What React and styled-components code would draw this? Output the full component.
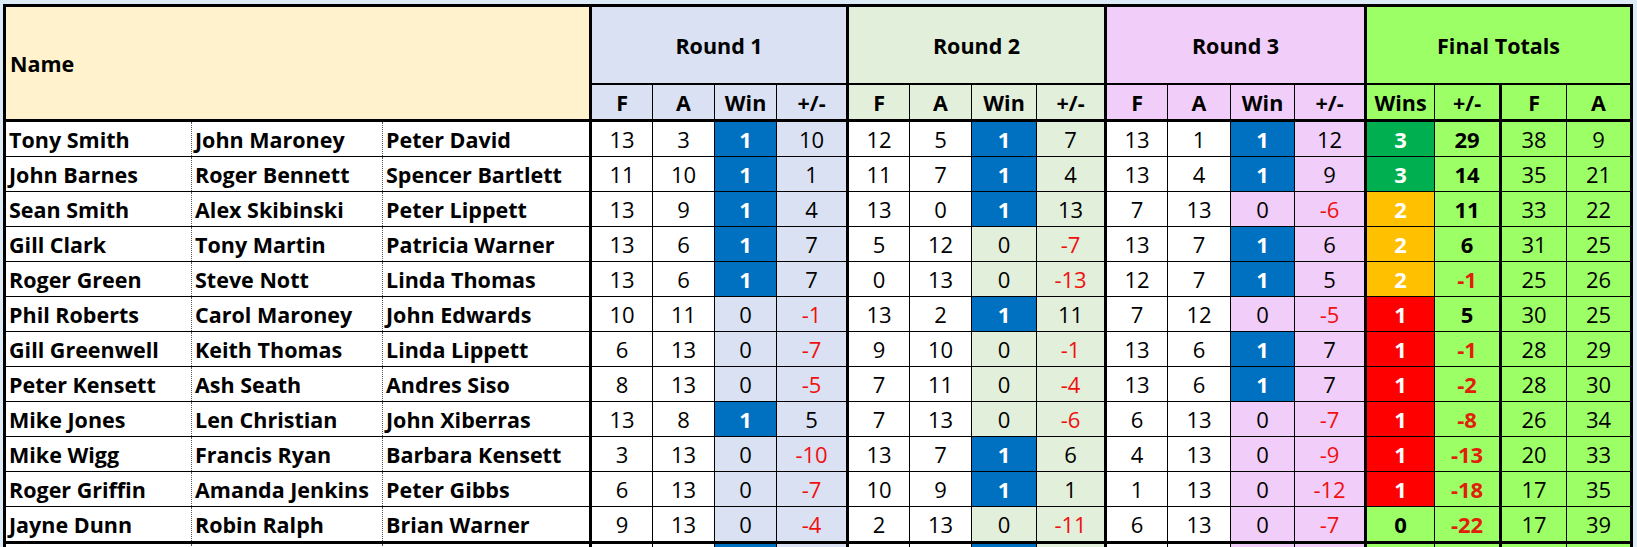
import React from "react";
import styled, { createGlobalStyle } from "styled-components";

const GlobalStyle = createGlobalStyle`
  html,
  body {
    margin: 0;
    padding: 0;
    background: #ddebf7;
    overflow: hidden;
  }

  body {
    font-family: "Open Sans", "Liberation Sans", sans-serif;
  }
`;

const fills = {
  white: "#ffffff",
  name: "#fff2cc",
  r1: "#d9e1f2",
  r2: "#e2efda",
  r3: "#f1cdf9",
  final: "#9cff66",
  blue: "#0070c0",
  green: "#00b050",
  gold: "#ffc000",
  red: "#ff0000",
};

const groups = [
  { key: "r1", label: "Round 1", cols: ["F", "A", "Win", "+/-"], widths: [62, 62, 62, 71] },
  { key: "r2", label: "Round 2", cols: ["F", "A", "Win", "+/-"], widths: [62, 62, 65, 69] },
  { key: "r3", label: "Round 3", cols: ["F", "A", "Win", "+/-"], widths: [62, 63, 64, 71] },
];

const finalCols = ["Wins", "+/-", "F", "A"];
const finalWidths = [69, 66, 66, 65];
const nameWidths = [187, 191, 208];

const rows = [
  [["Tony Smith", "John Maroney", "Peter David"], [[13, 3, 1, 10], [12, 5, 1, 7], [13, 1, 1, 12]], [3, 29, 38, 9]],
  [["John Barnes", "Roger Bennett", "Spencer Bartlett"], [[11, 10, 1, 1], [11, 7, 1, 4], [13, 4, 1, 9]], [3, 14, 35, 21]],
  [["Sean Smith", "Alex Skibinski", "Peter Lippett"], [[13, 9, 1, 4], [13, 0, 1, 13], [7, 13, 0, -6]], [2, 11, 33, 22]],
  [["Gill Clark", "Tony Martin", "Patricia Warner"], [[13, 6, 1, 7], [5, 12, 0, -7], [13, 7, 1, 6]], [2, 6, 31, 25]],
  [["Roger Green", "Steve Nott", "Linda Thomas"], [[13, 6, 1, 7], [0, 13, 0, -13], [12, 7, 1, 5]], [2, -1, 25, 26]],
  [["Phil Roberts", "Carol Maroney", "John Edwards"], [[10, 11, 0, -1], [13, 2, 1, 11], [7, 12, 0, -5]], [1, 5, 30, 25]],
  [["Gill Greenwell", "Keith Thomas", "Linda Lippett"], [[6, 13, 0, -7], [9, 10, 0, -1], [13, 6, 1, 7]], [1, -1, 28, 29]],
  [["Peter Kensett", "Ash Seath", "Andres Siso"], [[8, 13, 0, -5], [7, 11, 0, -4], [13, 6, 1, 7]], [1, -2, 28, 30]],
  [["Mike Jones", "Len Christian", "John Xiberras"], [[13, 8, 1, 5], [7, 13, 0, -6], [6, 13, 0, -7]], [1, -8, 26, 34]],
  [["Mike Wigg", "Francis Ryan", "Barbara Kensett"], [[3, 13, 0, -10], [13, 7, 1, 6], [4, 13, 0, -9]], [1, -13, 20, 33]],
  [["Roger Griffin", "Amanda Jenkins", "Peter Gibbs"], [[6, 13, 0, -7], [10, 9, 1, 1], [1, 13, 0, -12]], [1, -18, 17, 35]],
  [["Jayne Dunn", "Robin Ralph", "Brian Warner"], [[9, 13, 0, -4], [2, 13, 0, -11], [6, 13, 0, -7]], [0, -22, 17, 39]],
  // next row, cut off by the window
  [["", "", ""], [["", "", 1, ""], ["", "", 1, ""], ["", "", 0, ""]], ["", "", "", ""]],
];

const winsFill = { 3: "green", 2: "gold", 1: "red" };

function App() {
  return (
    <Sheet>
      <GlobalStyle />
      <Grid>
        <colgroup>
          {[...nameWidths, ...groups.flatMap((g) => g.widths), ...finalWidths].map((w, i) => (
            <col key={i} style={{ width: w }} />
          ))}
        </colgroup>
        <thead>
          <tr>
            <NameHead rowSpan={2} colSpan={3}>
              Name
            </NameHead>
            {groups.map((g) => (
              <GroupHead key={g.key} colSpan={4} $fill={g.key}>
                {g.label}
              </GroupHead>
            ))}
            <GroupHead colSpan={4} $fill="final">
              Final Totals
            </GroupHead>
          </tr>
          <tr>
            {groups.map((g) =>
              g.cols.map((c, i) => (
                <SubHead key={g.key + i} $fill={g.key} $start={i === 0}>
                  {c}
                </SubHead>
              ))
            )}
            {finalCols.map((c, i) => (
              <SubHead key={"f" + i} $fill="final" $start={i === 0 || i === 2}>
                {c}
              </SubHead>
            ))}
          </tr>
        </thead>
        <tbody>
          {rows.map(([names, rounds, totals], r) => (
            <Row key={r} $last={r === rows.length - 2}>
              {names.map((n, i) => (
                <NameCell key={i} $first={i === 0} $lastName={i === 2}>
                  {n}
                </NameCell>
              ))}
              {rounds.map(([f, a, w, d], g) => {
                const key = groups[g].key;
                return (
                  <React.Fragment key={g}>
                    <Num $fill="white" $start>
                      {f}
                    </Num>
                    <Num $fill="white">{a}</Num>
                    <Num $fill={w === 1 ? "blue" : key} $light={w === 1} $bold={w === 1}>
                      {names[0] ? w : ""}
                    </Num>
                    <Num $fill={key} $neg={d < 0}>
                      {d}
                    </Num>
                  </React.Fragment>
                );
              })}
              <Num $fill={winsFill[totals[0]] || "final"} $light={totals[0] > 0} $bold $start>
                {totals[0]}
              </Num>
              <Num $fill="final" $bold $neg={totals[1] < 0} $dark>
                {totals[1]}
              </Num>
              <Num $fill="final" $start>
                {totals[2]}
              </Num>
              <Num $fill="final">{totals[3]}</Num>
            </Row>
          ))}
        </tbody>
      </Grid>
    </Sheet>
  );
}

export default App;

const Sheet = styled.div`
  box-sizing: border-box;
  height: 547px;
  padding: 4px 0 0 3px;
  overflow: hidden;
`;

const Grid = styled.table`
  border-collapse: collapse;
  table-layout: fixed;
  width: 1630px;
  background: #fff;
  color: #000;
  font-size: 21.5px;
  border: 3px solid #000;
`;

const NameHead = styled.th`
  padding: 0 0 0 4px;
  text-align: left;
  vertical-align: middle;
  font-weight: 700;
  background: ${fills.name};
  border: 3px solid #000;
`;

const GroupHead = styled.th`
  height: 76px;
  padding: 0;
  font-weight: 700;
  text-align: center;
  background: ${(p) => fills[p.$fill]};
  border: 3px solid #000;
  border-bottom: 2px solid #000;
`;

const SubHead = styled.th`
  height: 34px;
  padding: 0;
  font-weight: 700;
  text-align: center;
  background: ${(p) => fills[p.$fill]};
  border: 1px solid #000;
  border-top: 2px solid #000;
  border-bottom: 3px solid #000;
  ${(p) => p.$start && "border-left: 3px solid #000;"}
`;

const Row = styled.tr`
  & > td {
    height: 34px;
    ${(p) => p.$last && "border-bottom: 3px solid #000;"}
  }
`;

const NameCell = styled.td`
  padding: 0 0 0 3px;
  font-weight: 700;
  white-space: nowrap;
  overflow: hidden;
  background: #fff;
  border-top: 1px solid #000;
  border-bottom: 1px solid #000;
  border-left: ${(p) => (p.$first ? "3px solid #000" : "1px dotted #555")};
  border-right: ${(p) => (p.$lastName ? "3px solid #000" : "1px dotted #555")};
`;

const Num = styled.td`
  padding: 0;
  text-align: center;
  font-size: 22px;
  font-weight: ${(p) => (p.$bold ? 700 : 400)};
  color: ${(p) => (p.$light ? "#fff" : p.$neg ? (p.$dark ? "#e0200a" : "#f01010") : "#000")};
  background: ${(p) => fills[p.$fill]};
  border: 1px solid #000;
  ${(p) => p.$start && "border-left: 3px solid #000;"}
`;
